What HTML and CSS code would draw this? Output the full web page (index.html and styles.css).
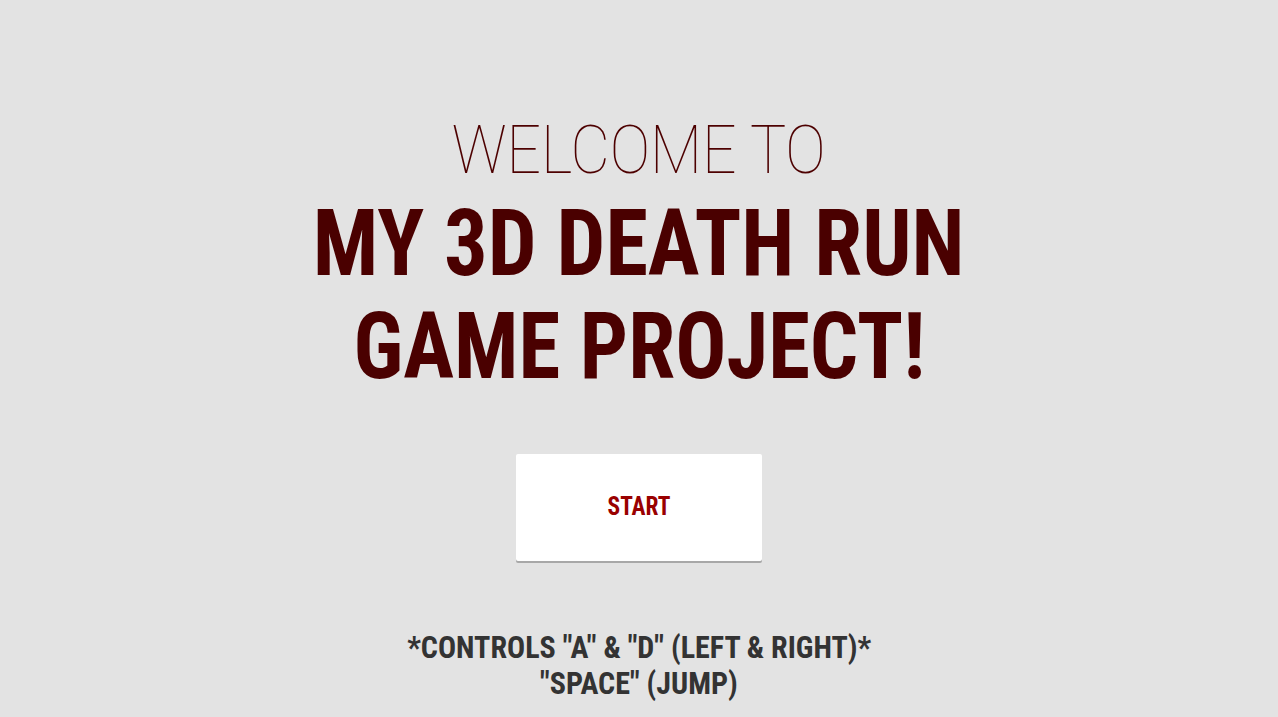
FILE: index.html
```html
<!DOCTYPE html>
<html>
<head>
<meta charset="utf-8">
<link rel="stylesheet" href="styles.css">
</head>
<body>
<main class="screen">
  <h2 class="welcome"><span class="squeeze-welcome">WELCOME TO</span></h2>
  <h1 class="title"><span class="line">MY 3D DEATH RUN</span><span class="line line-two">GAME PROJECT!</span></h1>
  <button class="start"><span class="squeeze-start">START</span></button>
  <p class="controls"><span class="line-c">*CONTROLS "A" &amp; "D" (LEFT &amp; RIGHT)*</span><span class="line-c">"SPACE" (JUMP)</span></p>
</main>
</body>
</html>
```
FILE: styles.css
```css
html, body {
  margin: 0;
  padding: 0;
  background: #e3e3e3;
}
.screen {
  height: 717px;
  display: flex;
  flex-direction: column;
  align-items: center;
  font-family: Roboto, "Liberation Sans", sans-serif;
  font-stretch: 75%;
}
.welcome {
  margin: 108px 0 0;
  font-weight: 100;
  font-size: 67px;
  line-height: 84px;
  color: #4d0000;
  font-stretch: 100%;
}
.squeeze-welcome {
  display: inline-block;
  transform: scaleX(0.905);
}
.title {
  margin: 0;
  display: flex;
  flex-direction: column;
  align-items: center;
  font-weight: 700;
  font-size: 92px;
  line-height: 103px;
  color: #4a0000;
}
.line {
  display: inline-block;
  transform: scaleX(0.94);
}
.line-two {
  transform: scaleX(0.924);
}
.start {
  margin-top: 56px;
  width: 246px;
  height: 107px;
  border: none;
  border-radius: 2px;
  background: #fff;
  box-shadow: 0 2px 0 #a8a8a8;
  font-family: inherit;
  font-stretch: 75%;
  font-weight: 700;
  font-size: 26px;
  color: #990000;
  padding: 0 0 4px;
}
.squeeze-start {
  display: inline-block;
  transform: scaleX(0.9);
}
.controls {
  margin: 69px 0 0;
  display: flex;
  flex-direction: column;
  align-items: center;
  font-weight: 700;
  font-size: 31px;
  line-height: 36px;
  color: #333;
}
.line-c {
  display: inline-block;
  transform: scaleX(0.97);
}
```
